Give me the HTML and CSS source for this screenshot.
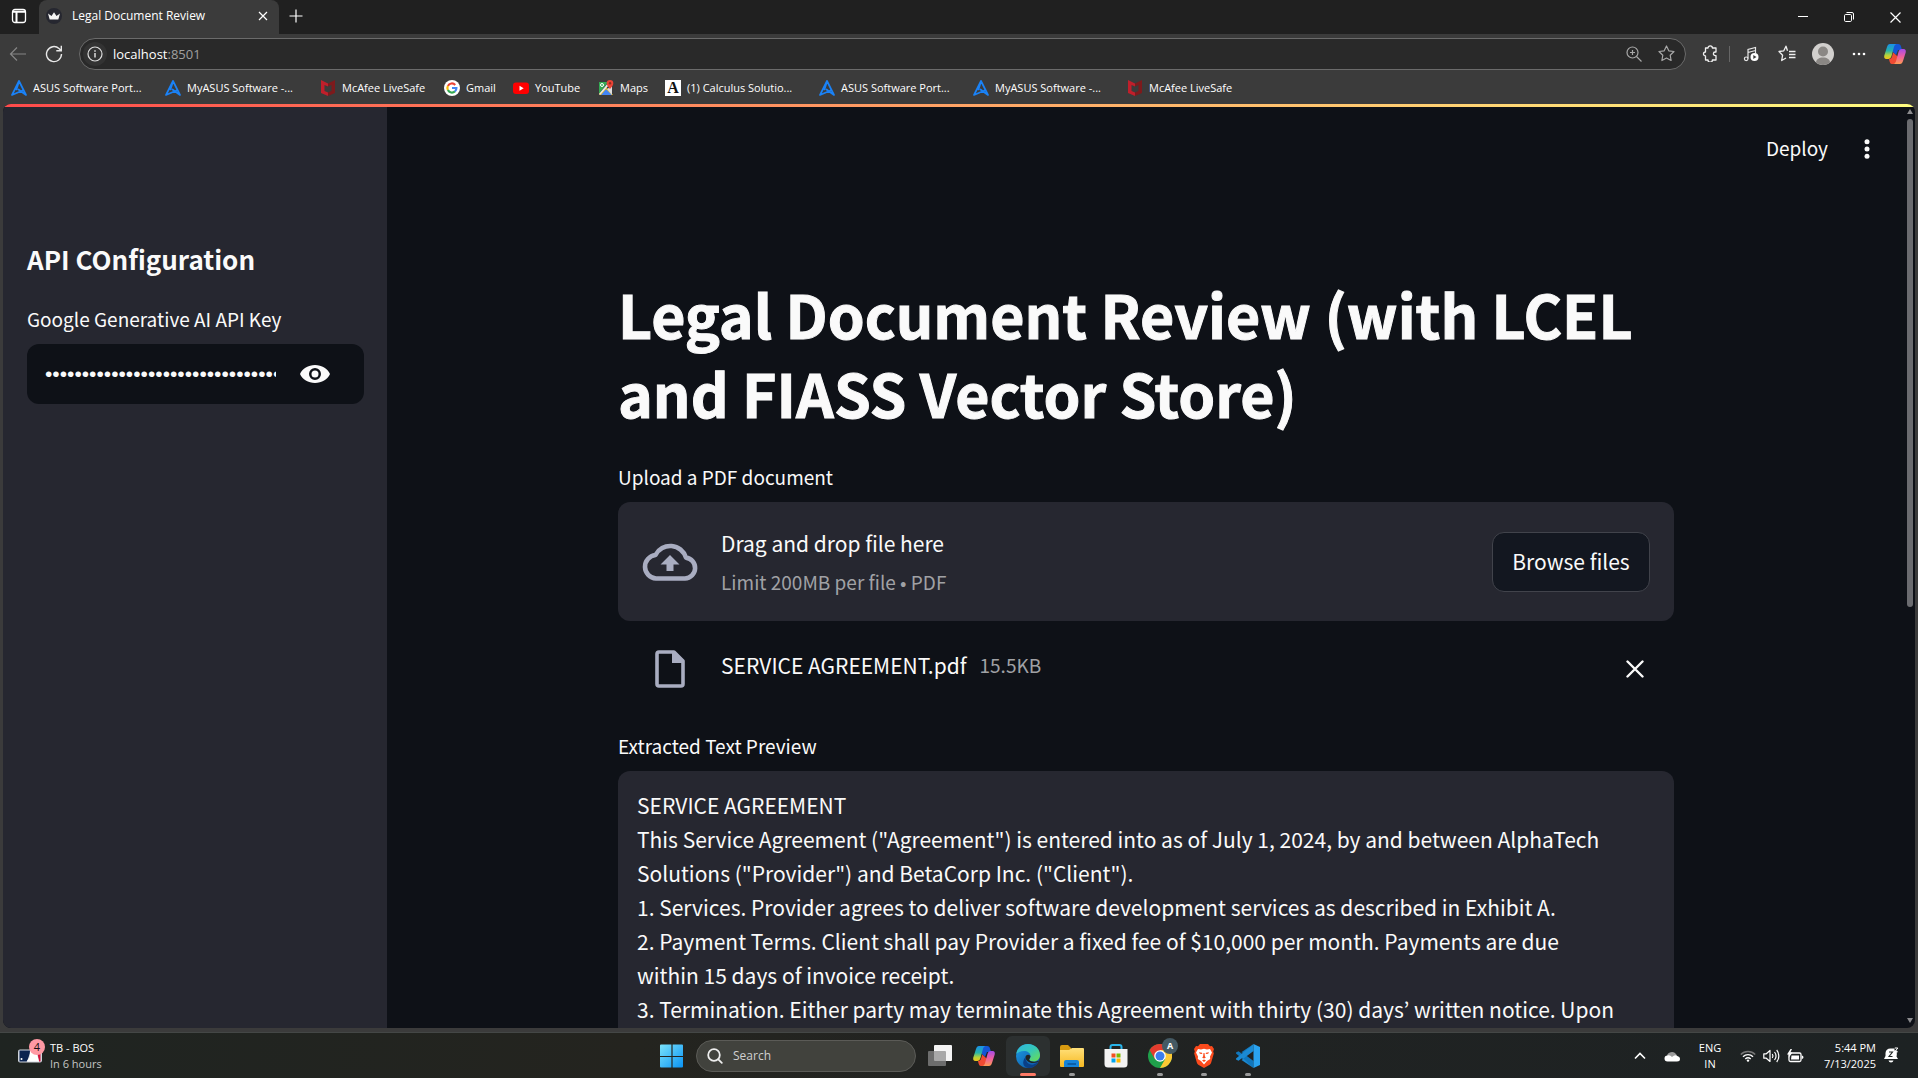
FILE: index.html
```html
<!DOCTYPE html>
<html lang="en">
<head>
<meta charset="utf-8">
<title>Legal Document Review</title>
<link rel="stylesheet" href="styles.css">
</head>
<body>
<svg class="defs" aria-hidden="true">
  <defs>
    <linearGradient id="cpA" x1="0" y1="0" x2="0" y2="1"><stop offset="0" stop-color="#1a8fe8"/><stop offset=".45" stop-color="#27b3a8"/><stop offset=".75" stop-color="#b5d33a"/><stop offset="1" stop-color="#f2c318"/></linearGradient>
    <linearGradient id="cpB" x1="0" y1="0" x2="0" y2="1"><stop offset="0" stop-color="#a54be8"/><stop offset=".5" stop-color="#ee5fa0"/><stop offset="1" stop-color="#ff9a52"/></linearGradient>
    <linearGradient id="edgeA" x1="0" y1="0" x2="1" y2="1"><stop offset="0" stop-color="#2fb5e0"/><stop offset=".5" stop-color="#35c7b8"/><stop offset="1" stop-color="#6fe04a"/></linearGradient>
    <linearGradient id="edgeB" x1="0" y1="0" x2="1" y2="1"><stop offset="0" stop-color="#1c9de6"/><stop offset="1" stop-color="#0c4f9e"/></linearGradient>
    <linearGradient id="win" x1="0" y1="0" x2="1" y2="1"><stop offset="0" stop-color="#7be3fb"/><stop offset="1" stop-color="#0a93f5"/></linearGradient>
    <linearGradient id="fold" x1="0" y1="0" x2="0" y2="1"><stop offset="0" stop-color="#ffe07a"/><stop offset="1" stop-color="#f7b922"/></linearGradient>
    <symbol id="copilot" viewBox="0 0 24 24">
      <path fill="#1455d6" d="M9 2h6c2 0 2.600 1 3 2.500L19 8h-4l-2 5-5-5z"/>
      <path fill="url(#cpA)" d="M7 2h6.500c-1.500.5-2.200 1.800-2.700 3.500L8.500 14c-.6 2-1.500 3-3.300 3H3.500C1.500 17 .8 15.500 1.300 13.500L4 5c.6-2 1.500-3 3-3z"/>
      <path fill="#f04a33" d="M6 17c2 0 2.700-1 3.200-3l1-3.500 5 4.500-1.400 4.500c-.5 1.700-1.400 2.500-3 2.500H9c-2 0-2.200-1.500-3-5z"/>
      <path fill="url(#cpB)" d="M17 22h-6.500c1.500-.5 2.200-1.800 2.700-3.500l2.300-8.500c.6-2 1.500-3 3.300-3h1.700c2 0 2.700 1.500 2.200 3.500L20 19c-.6 2-1.500 3-3 3z"/>
    </symbol>
    <symbol id="asus" viewBox="0 0 16 16"><path d="M8 1 1 15l10.500-4.500M8 1l7 14-7.500-5.500M8 1.200 5.500 9.500" fill="none" stroke="#1a82f7" stroke-width="1.700" stroke-linejoin="round" stroke-linecap="round"/></symbol>
    <symbol id="mcafee" viewBox="0 0 16 16"><path fill="#c01f2b" d="M1 0l7 3.500v3L4.500 5v6L8 12.500V16l-7-3z"/><path fill="#7d1a1c" d="M15 0 8 3.500v3L11.500 5v6L8 12.500V16l7-3z"/></symbol>
  </defs>
</svg>

<div class="tabstrip">
  <button class="tab-menu" aria-label="Tab actions"><svg width="16" height="16" viewBox="0 0 16 16" fill="none" stroke="#fff" stroke-width="1.300"><rect x="1.500" y="1.500" width="13" height="13" rx="2.500"/><path d="M2 3.800h12M5.500 4v10" stroke-width="2"/></svg></button>
  <div class="tab">
    <svg width="16" height="16" viewBox="0 0 16 16"><circle cx="8" cy="8" r="8" fill="#262730"/><path fill="#f4f4f4" d="M2 5.500 5.500 8 8 4.200 10.500 8 14 5.500 12.300 11.500H3.700z"/></svg>
    <span class="tab-title">Legal Document Review</span>
    <button class="tab-close" aria-label="Close tab"><svg width="10" height="10" viewBox="0 0 10 10" stroke="#fff" stroke-width="1.200"><path d="M1 1l8 8M9 1 1 9"/></svg></button>
  </div>
  <button class="new-tab" aria-label="New tab"><svg width="14" height="14" viewBox="0 0 14 14" stroke="#fff" stroke-width="1.200"><path d="M7 .5v13M.5 7h13"/></svg></button>
  <div class="window-buttons">
    <button aria-label="Minimize"><svg width="10" height="10" viewBox="0 0 10 10" stroke="#fff"><path d="M0 4.500h10"/></svg></button>
    <button aria-label="Restore"><svg width="10" height="10" viewBox="0 0 10 10" fill="none" stroke="#fff"><rect x=".5" y="2.500" width="7" height="7" rx="1.200"/><path d="M2.500.5H8a1.500 1.500 0 0 1 1.500 1.500v5.500"/></svg></button>
    <button aria-label="Close"><svg width="11" height="11" viewBox="0 0 11 11" stroke="#fff" stroke-width="1.200"><path d="M.5.5l10 10M10.500.5l-10 10"/></svg></button>
  </div>
</div>

<div class="toolbar">
  <button aria-label="Back"><svg width="18" height="16" viewBox="0 0 18 16" fill="none" stroke="#858585" stroke-width="1.200"><path d="M17 8H1.500M8 1.500 1.500 8 8 14.500"/></svg></button>
  <button aria-label="Reload"><svg width="18" height="18" viewBox="0 0 18 18" fill="none" stroke="#e8e8e8" stroke-width="1.400"><path d="M16.500 9A7.500 7.500 0 1 1 14 3.500l2 2M16.300.800v5h-5"/></svg></button>
  <div class="address">
    <span class="site-info"><svg width="16" height="16" viewBox="0 0 16 16" fill="none" stroke="#ddd" stroke-width="1.200"><circle cx="8" cy="8" r="7"/><path d="M8 7v4.500M8 4.300v1.500" stroke-width="1.500"/></svg></span>
    <span class="url" role="textbox" aria-label="Address">localhost<span class="port">:8501</span></span>
    <button aria-label="Zoom"><svg width="16" height="16" viewBox="0 0 16 16" fill="none" stroke="#a8a8a8" stroke-width="1.200"><circle cx="6.500" cy="6.500" r="5.500"/><path d="M10.500 10.500l5 5M6.500 4v5M4 6.500h5"/></svg></button>
    <button aria-label="Favorite"><svg width="17" height="17" viewBox="0 0 17 17" fill="none" stroke="#a8a8a8" stroke-width="1.200" stroke-linejoin="round"><path d="M8.500 1l2.300 4.800 5.200.7-3.800 3.700.9 5.300-4.600-2.500-4.600 2.500.9-5.300L1 6.500l5.200-.7z"/></svg></button>
  </div>
  <div class="tools">
    <button aria-label="Extensions"><svg width="16" height="17" viewBox="0 0 16 17" fill="none" stroke="#f0f0f0" stroke-width="1.300" stroke-linejoin="round"><path d="M3.500 3H6a2.200 2.200 0 0 1 4.400 0H14v4h-.8a1.800 1.800 0 0 0 0 3.600H14V15h-3.600a2.200 2.200 0 0 1-4.400 0H3.500v-4a2 2 0 0 1 0-4z"/></svg></button>
    <span class="divider"></span>
    <button aria-label="Media"><svg width="16" height="16" viewBox="0 0 16 16" fill="none" stroke="#e8e8e8" stroke-width="1.200"><path d="M5 12.500V3.500L12.500 1.500v6M5 6.500l7.500-2"/><circle cx="3.200" cy="12.800" r="1.800"/><circle cx="11.500" cy="11" r="4" fill="#fff" stroke="none"/><path fill="#3b3b3b" stroke="none" d="M10.300 9l3.200 2-3.200 2z"/></svg></button>
    <button aria-label="Favorites"><svg width="18" height="17" viewBox="0 0 18 17" fill="none" stroke="#f0f0f0" stroke-width="1.300" stroke-linejoin="round"><path d="M9.500 5.800 8 1.200 5.800 5.800 1 6.500l3.600 3.700-.9 5.300L8 13M11 6.500h6.500M11 9.500h6.500M11 12.500h6.500"/></svg></button>
    <button aria-label="Profile"><svg width="22" height="22" viewBox="0 0 22 22"><circle cx="11" cy="11" r="11" fill="#d2d0ce"/><circle cx="11" cy="8.500" r="5" fill="#8a8784"/><path fill="#8a8784" d="M4 19.500c0-3 3-5 7-5s7 2 7 5a11 11 0 0 1-14 0z"/></svg></button>
    <button aria-label="Settings"><svg width="14" height="4" viewBox="0 0 14 4" fill="#fff"><circle cx="2" cy="2" r="1.300"/><circle cx="7" cy="2" r="1.300"/><circle cx="12" cy="2" r="1.300"/></svg></button>
    <button aria-label="Copilot"><svg width="24" height="24"><use href="#copilot"/></svg></button>
  </div>
</div>

<nav class="bookmarks" aria-label="Bookmarks">
  <a href="#"><svg><use href="#asus"/></svg>ASUS Software Port...</a>
  <a href="#"><svg><use href="#asus"/></svg>MyASUS Software -...</a>
  <a href="#"><svg><use href="#mcafee"/></svg>McAfee LiveSafe</a>
  <a href="#"><svg viewBox="0 0 16 16"><circle cx="8" cy="8" r="8" fill="#fff"/><g fill="none" stroke-width="2.200"><path stroke="#ea4335" d="M3.900 5.900a4.500 4.500 0 0 1 7.300-1"/><path stroke="#fbbc05" d="M3.900 5.900a4.500 4.500 0 0 0 0 4.200"/><path stroke="#34a853" d="M3.900 10.100a4.500 4.500 0 0 0 7 1.300"/><path stroke="#4285f4" d="M10.900 11.400A4.300 4.300 0 0 0 12.400 8H8"/></g></svg>Gmail</a>
  <a href="#"><svg viewBox="0 0 16 16"><rect y="2.500" width="16" height="11.500" rx="3" fill="#f00"/><path fill="#fff" d="M6.500 5.800v5L10.700 8.300z"/></svg>YouTube</a>
  <a href="#"><svg viewBox="0 0 16 16"><path fill="#34a853" d="M1 2h9L1 14z"/><path fill="#fbbc05" d="M1 14l7-7 7 8H2z"/><path fill="#4285f4" d="M3 15l5-6 6 6z"/><path fill="#e8e8e8" d="M1 14 10 3l1 2-9 10z"/><path fill="#ddd" d="M9 9l5-3v9z"/><circle cx="4" cy="5" r="1.500" fill="none" stroke="#fff"/><path fill="#ea4335" d="M12 0a3.300 3.300 0 0 1 3.300 3.300C15.300 6 12 9 12 9S8.700 6 8.700 3.300A3.300 3.300 0 0 1 12 0z"/><circle cx="12" cy="3.300" r="1.200" fill="#8f2b22"/></svg>Maps</a>
  <a href="#"><span class="letter">A</span>(1) Calculus Solutio...</a>
  <a href="#"><svg><use href="#asus"/></svg>ASUS Software Port...</a>
  <a href="#"><svg><use href="#asus"/></svg>MyASUS Software -...</a>
  <a href="#"><svg><use href="#mcafee"/></svg>McAfee LiveSafe</a>
</nav>

<div class="frame">
  <div class="page">
    <div class="decoration"></div>
    <aside class="sidebar">
      <h2>API COnfiguration</h2>
      <label class="field-label" for="key">Google Generative AI API Key</label>
      <div class="key-box">
        <input id="key" type="password" value="0000000000000000000000000000000000000000">
        <button aria-label="Show password"><svg width="30" height="18" viewBox="0 0 30 18"><path fill="#fafafa" fill-rule="evenodd" d="M15 0c6.800 0 12.600 3.700 15 9-2.400 5.300-8.200 9-15 9S2.400 14.300 0 9C2.400 3.700 8.200 0 15 0zm0 3a6 6 0 1 0 0 12 6 6 0 0 0 0-12z"/><circle cx="15" cy="9" r="3.500" fill="#fafafa"/></svg></button>
      </div>
    </aside>
    <main class="main">
      <header class="app-header">
        <button class="deploy">Deploy</button>
        <button aria-label="Menu"><svg width="6" height="20" viewBox="0 0 6 20" fill="#fafafa"><circle cx="3" cy="2.700" r="2.500"/><circle cx="3" cy="10" r="2.500"/><circle cx="3" cy="17.300" r="2.500"/></svg></button>
      </header>
      <div class="column">
        <h1>Legal Document Review (with LCEL and FIASS Vector Store)</h1>
        <p class="field-label">Upload a PDF document</p>
        <section class="dropzone">
          <svg width="56" height="38" viewBox="0 0 56 38"><path d="M14 35.500h29a10.500 10.500 0 0 0 1-20.900A16.500 16.500 0 0 0 13.500 12 11.800 11.800 0 0 0 14 35.500z" fill="none" stroke="#a9adc1" stroke-width="4.600" stroke-linejoin="round"/><path fill="#a9adc1" d="M28 12l9.500 9.500H31.500V28h-7v-6.500h-6z"/></svg>
          <div class="drop-text">
            <span>Drag and drop file here</span>
            <small>Limit 200MB per file • PDF</small>
          </div>
          <button class="browse">Browse files</button>
        </section>
        <div class="file">
          <svg width="30" height="38" viewBox="0 0 30 38"><path d="M4 2h15l9 9v23a2 2 0 0 1-2 2H4a2 2 0 0 1-2-2V4a2 2 0 0 1 2-2z" fill="none" stroke="#a9adc1" stroke-width="3.600" stroke-linejoin="round"/><path fill="#a9adc1" d="M17 1.500h3l9 9V13H17z"/></svg>
          <div class="file-info">
            <span>SERVICE AGREEMENT.pdf</span>
            <small>15.5KB</small>
          </div>
          <button aria-label="Remove file"><svg width="18" height="18" viewBox="0 0 18 18" stroke="#fafafa" stroke-width="2.400" stroke-linecap="round"><path d="M1.500 1.500l15 15M16.500 1.500l-15 15"/></svg></button>
        </div>
        <label class="field-label" for="preview">Extracted Text Preview</label>
        <textarea id="preview" rows="9">SERVICE AGREEMENT
This Service Agreement ("Agreement") is entered into as of July 1, 2024, by and between AlphaTech
Solutions ("Provider") and BetaCorp Inc. ("Client").
1. Services. Provider agrees to deliver software development services as described in Exhibit A.
2. Payment Terms. Client shall pay Provider a fixed fee of $10,000 per month. Payments are due
within 15 days of invoice receipt.
3. Termination. Either party may terminate this Agreement with thirty (30) days’ written notice. Upon</textarea>
      </div>
    </main>
    <div class="scrollbar"><i class="up"></i><i class="thumb"></i><i class="down"></i></div>
  </div>
</div>

<footer class="taskbar">
  <div class="widget">
    <span class="score-icon"><svg width="24" height="14" viewBox="0 0 24 14"><rect width="24" height="13" y=".5" rx="2" fill="#cfd4dc"/><path fill="#0a2350" d="M1.500 1.500H13L9 12.500H1.500z"/><path fill="#d0103a" d="M19 1.500h3.500v11H21z"/><path fill="#fff" d="M12 1.500h6l3 11H8.500l3-4z"/><circle cx="3.500" cy="10" r="1" fill="#fff"/></svg><b class="badge">4</b></span>
    <span class="widget-text"><span>TB - BOS</span><span class="dim">In 6 hours</span></span>
  </div>
  <div class="apps">
    <button aria-label="Start"><svg width="24" height="24" viewBox="0 0 24 24" fill="url(#win)"><path d="M0 1.500Q0 .5 1 .5h10.400v11.400H0zM12.600.5H22q1 0 1 1v10.400H12.600zM0 13h11.400v10.500H1q-1 0-1-1zM12.600 13H23v9.500q0 1-1 1h-9.400z"/></svg></button>
    <label class="search"><svg width="16" height="16" viewBox="0 0 16 16" fill="none" stroke="#eee" stroke-width="1.800" stroke-linecap="round"><circle cx="7" cy="7" r="5.800"/><path d="M11.300 11.300l3.500 3.500"/></svg><input type="text" placeholder="Search" aria-label="Search"></label>
    <button aria-label="Task view"><svg width="24" height="24" viewBox="0 0 24 24"><rect x="6" y="1" width="18" height="16" rx="1" fill="#f4f4f4"/><rect y="7" width="18" height="15" rx="1" fill="#8a8a8a" fill-opacity=".72"/></svg></button>
    <button aria-label="Copilot"><svg width="24" height="24"><use href="#copilot"/></svg></button>
    <button class="active running" aria-label="Edge"><svg width="24" height="24" viewBox="0 0 24 24"><circle cx="12" cy="12" r="12" fill="url(#edgeB)"/><path fill="url(#edgeA)" d="M.2 10C1.200 4 6 0 12 0c7 0 12 5 12 11 0 4-3 6.500-6.500 6.500-3 0-4.500-1.200-4.300-2 .2-.8 1.300-1.500 1.300-3.500C14.500 9 11.500 7 8 7 4.500 7 1.500 8.500.2 10z"/><path fill="#0a3f86" d="M9.500 13c-.3 5 4 8.500 8 7.500 1.700-.4 3.500-1.500 4.700-2.500-2 4-6 6-10 6C7 23 5.500 18 9.500 13z"/><path fill="#202423" d="M9.500 13c0 3.500 3.500 6 7.500 6 3 0 4.500-1 5.700-1.500.3-.6 0-.8-.7-.5-1 .4-2.500.7-4 .7-3 0-5-1.200-4.800-2.200.1-.8 1.300-1.500 1.300-3.500-2.500-2.500-5-.5-5 1z"/></svg></button>
    <button class="running" aria-label="File Explorer"><svg width="24" height="22" viewBox="0 0 24 22"><path fill="#d89a10" d="M0 2Q0 0 2 0h6l3 3v3H0z"/><path fill="url(#fold)" d="M0 5h9l3-2h11q1 0 1 1v17q0 1-1 1H1q-1 0-1-1z"/><path fill="#1683d8" d="M4 22v-5q0-2 2-2h11q2 0 2 2v5z"/><path fill="#0b5ea8" d="M7.500 18h8.500v2H7.500z"/></svg></button>
    <button aria-label="Store"><svg width="24" height="24" viewBox="0 0 24 24"><path d="M6.500 7V3q0-2 2-2h7q2 0 2 2v4" fill="none" stroke="#28b4ea" stroke-width="2"/><path fill="#f3f3f3" d="M.5 5h23v15q0 3.500-3.500 3.500H4Q.5 23.500.5 20z"/><path fill="#f25022" d="M7.500 9.500h4v4h-4z"/><path fill="#7fba00" d="M12.500 9.500h4v4h-4z"/><path fill="#00a4ef" d="M7.500 14.500h4v4h-4z"/><path fill="#ffb900" d="M12.500 14.500h4v4h-4z"/></svg></button>
    <button class="running" aria-label="Chrome"><svg width="24" height="24" viewBox="0 0 24 24"><circle cx="12" cy="12" r="12" fill="#1fa04b"/><path fill="#fcc934" d="M12 12V6h10.400A12 12 0 0 1 12 24l5.200-9z"/><path fill="#e33b2e" d="M1.600 6A12 12 0 0 1 22.400 6H12l-5.200 9z"/><circle cx="12" cy="12" r="5.800" fill="#fff"/><circle cx="12" cy="12" r="4.500" fill="#3b7ded"/></svg><b class="profile">A</b></button>
    <button class="running" aria-label="Brave"><svg width="20" height="24" viewBox="0 0 20 24"><path fill="#fb4a1c" d="M6 0h8l2 2.300 2-.3 2 3-.8 2.500.6 2-2.600 9q-.4 1.400-1.500 2.200L10 24l-5.700-3.300Q3.200 19.900 2.800 18.500L.2 9.500l.6-2L0 5l2-3 2 .3z"/><path fill="#fff" d="M4 5l3 .5 3-.7 3 .7 3-.5 2 3.500-2 4 .2 2.500-3.200 2L10 20.500l-3-3.500-3.200-2 .2-2.500L2 8.500z"/><path fill="#fb4a1c" d="M5 8.200l3 .6.300 1.200-2.500-.3zM15 8.200l-3 .6-.3 1.200 2.500-.3zM9.500 9h1l.4 3.500 1 1-1.900 1-1.900-1 1-1zM8 16.500l2-.9 2 .9-2 1.400z"/></svg></button>
    <button class="running" aria-label="Visual Studio Code"><svg width="24" height="24" viewBox="0 0 24 24"><path fill="#1077bd" d="M17.500 0 6.500 10.300 2.500 7.200 0 8.500v1L17.500 24V17L5.500 8l-2 1.500z"/><path fill="#1b8ad3" d="M17.500 24 6.500 13.700l-4 3.100L0 15.500v-1L17.500 0v7L5.500 16z"/><path fill="#2aa3f0" d="M17.500 0 24 3v18l-6.500 3z"/></svg></button>
  </div>
  <div class="tray">
    <svg width="12" height="8" viewBox="0 0 12 8" fill="none" stroke="#fff" stroke-width="1.600"><path d="M1 6.500l5-5 5 5"/></svg>
    <svg class="cloud" width="16" height="12" viewBox="0 0 16 12"><path fill="#9c9c9c" d="M3 6a5 4.500 0 0 1 9-2l2 3H3z"/><path fill="#fff" d="M3.500 11.500a3 3 0 0 1 0-6Q6 4.500 8 7q3-3 5-1 3 .5 3 3t-3 2.500z"/></svg>
    <span class="lang"><span>ENG</span><span>IN</span></span>
    <span class="status">
      <svg width="16" height="12" viewBox="0 0 16 12" fill="none" stroke="#fff" stroke-width="1.400"><path stroke="#777" d="M.8 4.500a10 10 0 0 1 14.400 0"/><path d="M3 6.700a7 7 0 0 1 10 0M5.300 9a4 4 0 0 1 5.400 0"/><circle cx="8" cy="10.600" r="1.200" fill="#fff" stroke="none"/></svg>
      <svg width="17" height="14" viewBox="0 0 17 14" fill="none" stroke="#fff" stroke-width="1.200"><path stroke-linejoin="round" d="M.8 4.800h2.500L7 1.500v11L3.300 9.200H.8zM9.300 5a3.500 3.500 0 0 1 0 4M11.500 3a6.500 6.500 0 0 1 0 8M13.700 1a9.500 9.500 0 0 1 0 12"/></svg>
      <svg width="17" height="14" viewBox="0 0 17 14"><rect x="2" y="4" width="12" height="8.500" rx="1.500" fill="none" stroke="#fff" stroke-width="1.300"/><path fill="#fff" d="M4.500 6.500H12v4H4zM14.700 6.500q1.800 0 1.800 1.800t-1.800 1.800zM3.500 0 0 5.500h2.300L1.500 9l4-5.500H3.300L5 0z"/></svg>
    </span>
    <span class="clock"><span>5:44 PM</span><span>7/13/2025</span></span>
    <svg width="15" height="17" viewBox="0 0 15 17"><path fill="#fff" d="M6.500 1.500h4v2h2.300v4.500l-.3 1.500 1.500 2.500H0l1.500-3v-3a5 5 0 0 1 5-4.500zM4.500 13.500h5q-.5 2-2.500 2t-2.500-2z"/><path fill="none" stroke="#1f2423" stroke-width="1.100" d="M5 5h3.500L5 9.500h3.500"/><path fill="none" stroke="#fff" d="M10.800 1h3l-3 3.800h3"/></svg>
  </div>
</footer>
</body>
</html>
```
FILE: styles.css
```css
* { box-sizing: border-box; }
body {
  margin: 0;
  height: 100vh;
  display: flex;
  flex-direction: column;
  overflow: hidden;
  background: #3b3b3b;
  color: #fff;
  font: 12px/16px "Open Sans", "Noto Sans", sans-serif;
}
button {
  display: flex;
  align-items: center;
  justify-content: center;
  padding: 0;
  border: 0;
  background: none;
  color: inherit;
  font: inherit;
}
input, textarea { border: 0; padding: 0; outline: 0; background: none; color: inherit; font: inherit; }
h1, h2, p { margin: 0; }
svg { display: block; flex: none; }
.defs { position: absolute; width: 0; height: 0; }

/* Tab strip */
.tabstrip { display: flex; height: 34px; background: #202020; flex: none; }
.tab-menu { width: 39px; padding: 0 2px 2px 0; }
.tab {
  display: flex;
  align-items: center;
  gap: 10px;
  width: 240px;
  padding: 0 7px 2px;
  border-radius: 8px 8px 0 0;
  background: #3b3b3b;
}
.tab-title { flex: 1; font-size: 12px; white-space: nowrap; }
.tab-close { width: 18px; height: 18px; }
.new-tab { width: 34px; padding-bottom: 2px; }
.window-buttons { display: flex; margin-left: auto; }
.window-buttons button { width: 46px; }

/* Toolbar */
.toolbar { display: flex; align-items: center; height: 39px; flex: none; }
.toolbar > button { width: 36px; height: 32px; }
.address {
  display: flex;
  align-items: center;
  flex: 1;
  height: 32px;
  margin-left: 7px;
  padding: 0 3px;
  border: 1px solid #6b6b6b;
  border-radius: 16px;
  background: #292929;
}
.site-info { display: grid; place-items: center; width: 24px; height: 24px; border-radius: 12px; background: #333; }
.url { flex: 1; padding-left: 6px; font-size: 13px; }
.port { color: #a0a0a0; }
.address button { width: 32px; height: 24px; }
.tools { display: flex; align-items: center; width: 232px; padding-left: 6px; }
.tools button { width: 36px; height: 32px; }
.divider { width: 1px; height: 16px; margin: 0 3px 0 1px; background: #666; }

/* Bookmarks */
.bookmarks {
  display: grid;
  grid-template-columns: 154px 155px 124px 69px 85px 67px 154px 154px 154px 154px;
  align-items: center;
  height: 31px;
  padding: 0 0 1px 11px;
  flex: none;
}
.bookmarks a { display: flex; align-items: center; gap: 6px; color: #fff; text-decoration: none; font-size: 11px; white-space: nowrap; }
.bookmarks svg { width: 16px; height: 16px; }
.letter { width: 16px; height: 16px; background: #fff; color: #111; text-align: center; font: bold 16px/16px "Liberation Serif", serif; }

/* App page */
.frame { flex: 1; min-height: 0; padding: 0 3px 4px; }
.page {
  position: relative;
  display: flex;
  height: 100%;
  overflow: hidden;
  border-radius: 8px;
  background: #0e1117;
  color: #fafafa;
  font: 21px/34px "Noto Sans CJK KR", "Noto Sans CJK SC", sans-serif;
}
.decoration { position: absolute; inset: 0 0 auto; height: 3px; background: linear-gradient(90deg, #ff4b4b, #fffd80); }
.sidebar { width: 384px; padding: 135px 23px 0 24px; background: #262730; flex: none; }
.sidebar h2 { margin-bottom: 25px; font-size: 26px; line-height: 40px; font-weight: 700; }
.field-label { display: block; margin-bottom: 10px; font-size: 19px; line-height: 30px; }
.key-box { display: flex; align-items: center; height: 60px; padding-left: 18px; border-radius: 12px; background: #0e1117; }
.key-box input { width: 231px; font: 21px/34px "Liberation Sans", sans-serif; }
.key-box button { width: 78px; height: 60px; }

.main { flex: 1; padding-right: 10px; }
.app-header { display: flex; justify-content: flex-end; align-items: center; height: 90px; padding-right: 35px; }
.app-header .deploy { margin-right: 36px; padding-bottom: 2px; font-size: 19px; }
.column { width: 100%; max-width: 1104px; margin: 0 auto; padding: 80px 24px 0; }
.column h1 { margin-bottom: 30px; font-size: 59px; line-height: 79px; font-weight: 700; -webkit-text-stroke: 1px #fafafa; }
.dropzone { display: flex; align-items: center; height: 119px; padding: 0 24px; border-radius: 12px; background: #262730; }
.drop-text { display: flex; flex-direction: column; gap: 8px; flex: 1; padding-left: 23px; }
.drop-text span { line-height: 32px; }
small { font-size: 19px; line-height: 30px; color: #a0a1a5; }
.browse { width: 158px; height: 60px; padding-bottom: 2px; border: 1px solid #41434b; border-radius: 12px; background: #131720; }
.file { display: flex; align-items: center; height: 95px; margin-bottom: 15px; padding: 0 30px 0 37px; }
.file-info { display: flex; align-items: center; gap: 13px; padding: 0 0 8px 36px; }
.file button { margin-left: auto; }
.column textarea {
  display: block;
  width: 100%;
  padding: 17px 19px;
  border-radius: 12px;
  background: #262730;
  line-height: 34px;
  resize: none;
  overflow: hidden;
}
.scrollbar { position: absolute; top: 3px; right: 2px; bottom: 0; display: flex; flex-direction: column; align-items: center; width: 6px; }
.scrollbar i { flex: none; }
.up, .down { border: 3px solid transparent; }
.up { margin: 2px 0 5px; border-top-width: 0; border-bottom: 5px solid #8b8b8e; }
.down { margin: auto 0 5px; border-bottom-width: 0; border-top: 5px solid #8b8b8e; }
.thumb { width: 6px; height: 53%; border-radius: 3px; background: #6b6c70; }

/* Taskbar */
.taskbar {
  display: grid;
  grid-template-columns: 1fr auto 1fr;
  height: 46px;
  flex: none;
  border-top: 1px solid #444746;
  background: linear-gradient(90deg, #1f2421, #24241f 33%, #212322 55%, #1d2223);
}
.widget { display: flex; align-items: center; gap: 8px; padding-left: 18px; font-size: 11px; }
.score-icon { position: relative; }
.badge { position: absolute; top: -10px; right: -3px; width: 16px; height: 16px; border-radius: 8px; background: #ff99a4; color: #111; text-align: center; font-weight: 400; }
.widget-text, .lang, .clock { display: flex; flex-direction: column; }
.dim { color: #c4c6c5; }
.apps { display: flex; align-items: center; padding-left: 2px; }
.apps button { position: relative; width: 44px; height: 40px; }
.search { display: flex; align-items: center; gap: 10px; width: 220px; height: 32px; margin: 0 2px; padding-left: 10px; border: 1px solid #5b5b57; border-radius: 16px; background: #41423d; }
.search input { width: 150px; font-size: 12px; }
.search input::placeholder { color: #d0d0d0; opacity: 1; }
.active { background: #2c3030; border-radius: 6px; }
.running::after { content: ""; position: absolute; bottom: 0; left: 50%; width: 6px; height: 3px; margin-left: -3px; border-radius: 2px; background: #9a9a9a; }
.active.running::after { width: 16px; margin-left: -8px; background: #ff7b67; }
.profile { position: absolute; top: 2px; right: 4px; width: 16px; height: 16px; border-radius: 8px; background: #455a64; font-size: 9px; line-height: 16px; }
.tray { display: flex; align-items: center; justify-content: flex-end; padding-right: 19px; font-size: 11px; }
.cloud { margin: 0 18px; }
.lang { align-items: center; width: 24px; }
.status { display: flex; align-items: center; gap: 7px; margin: 0 16px 0 18px; }
.clock { align-items: flex-end; width: 56px; margin-right: 8px; }
```
